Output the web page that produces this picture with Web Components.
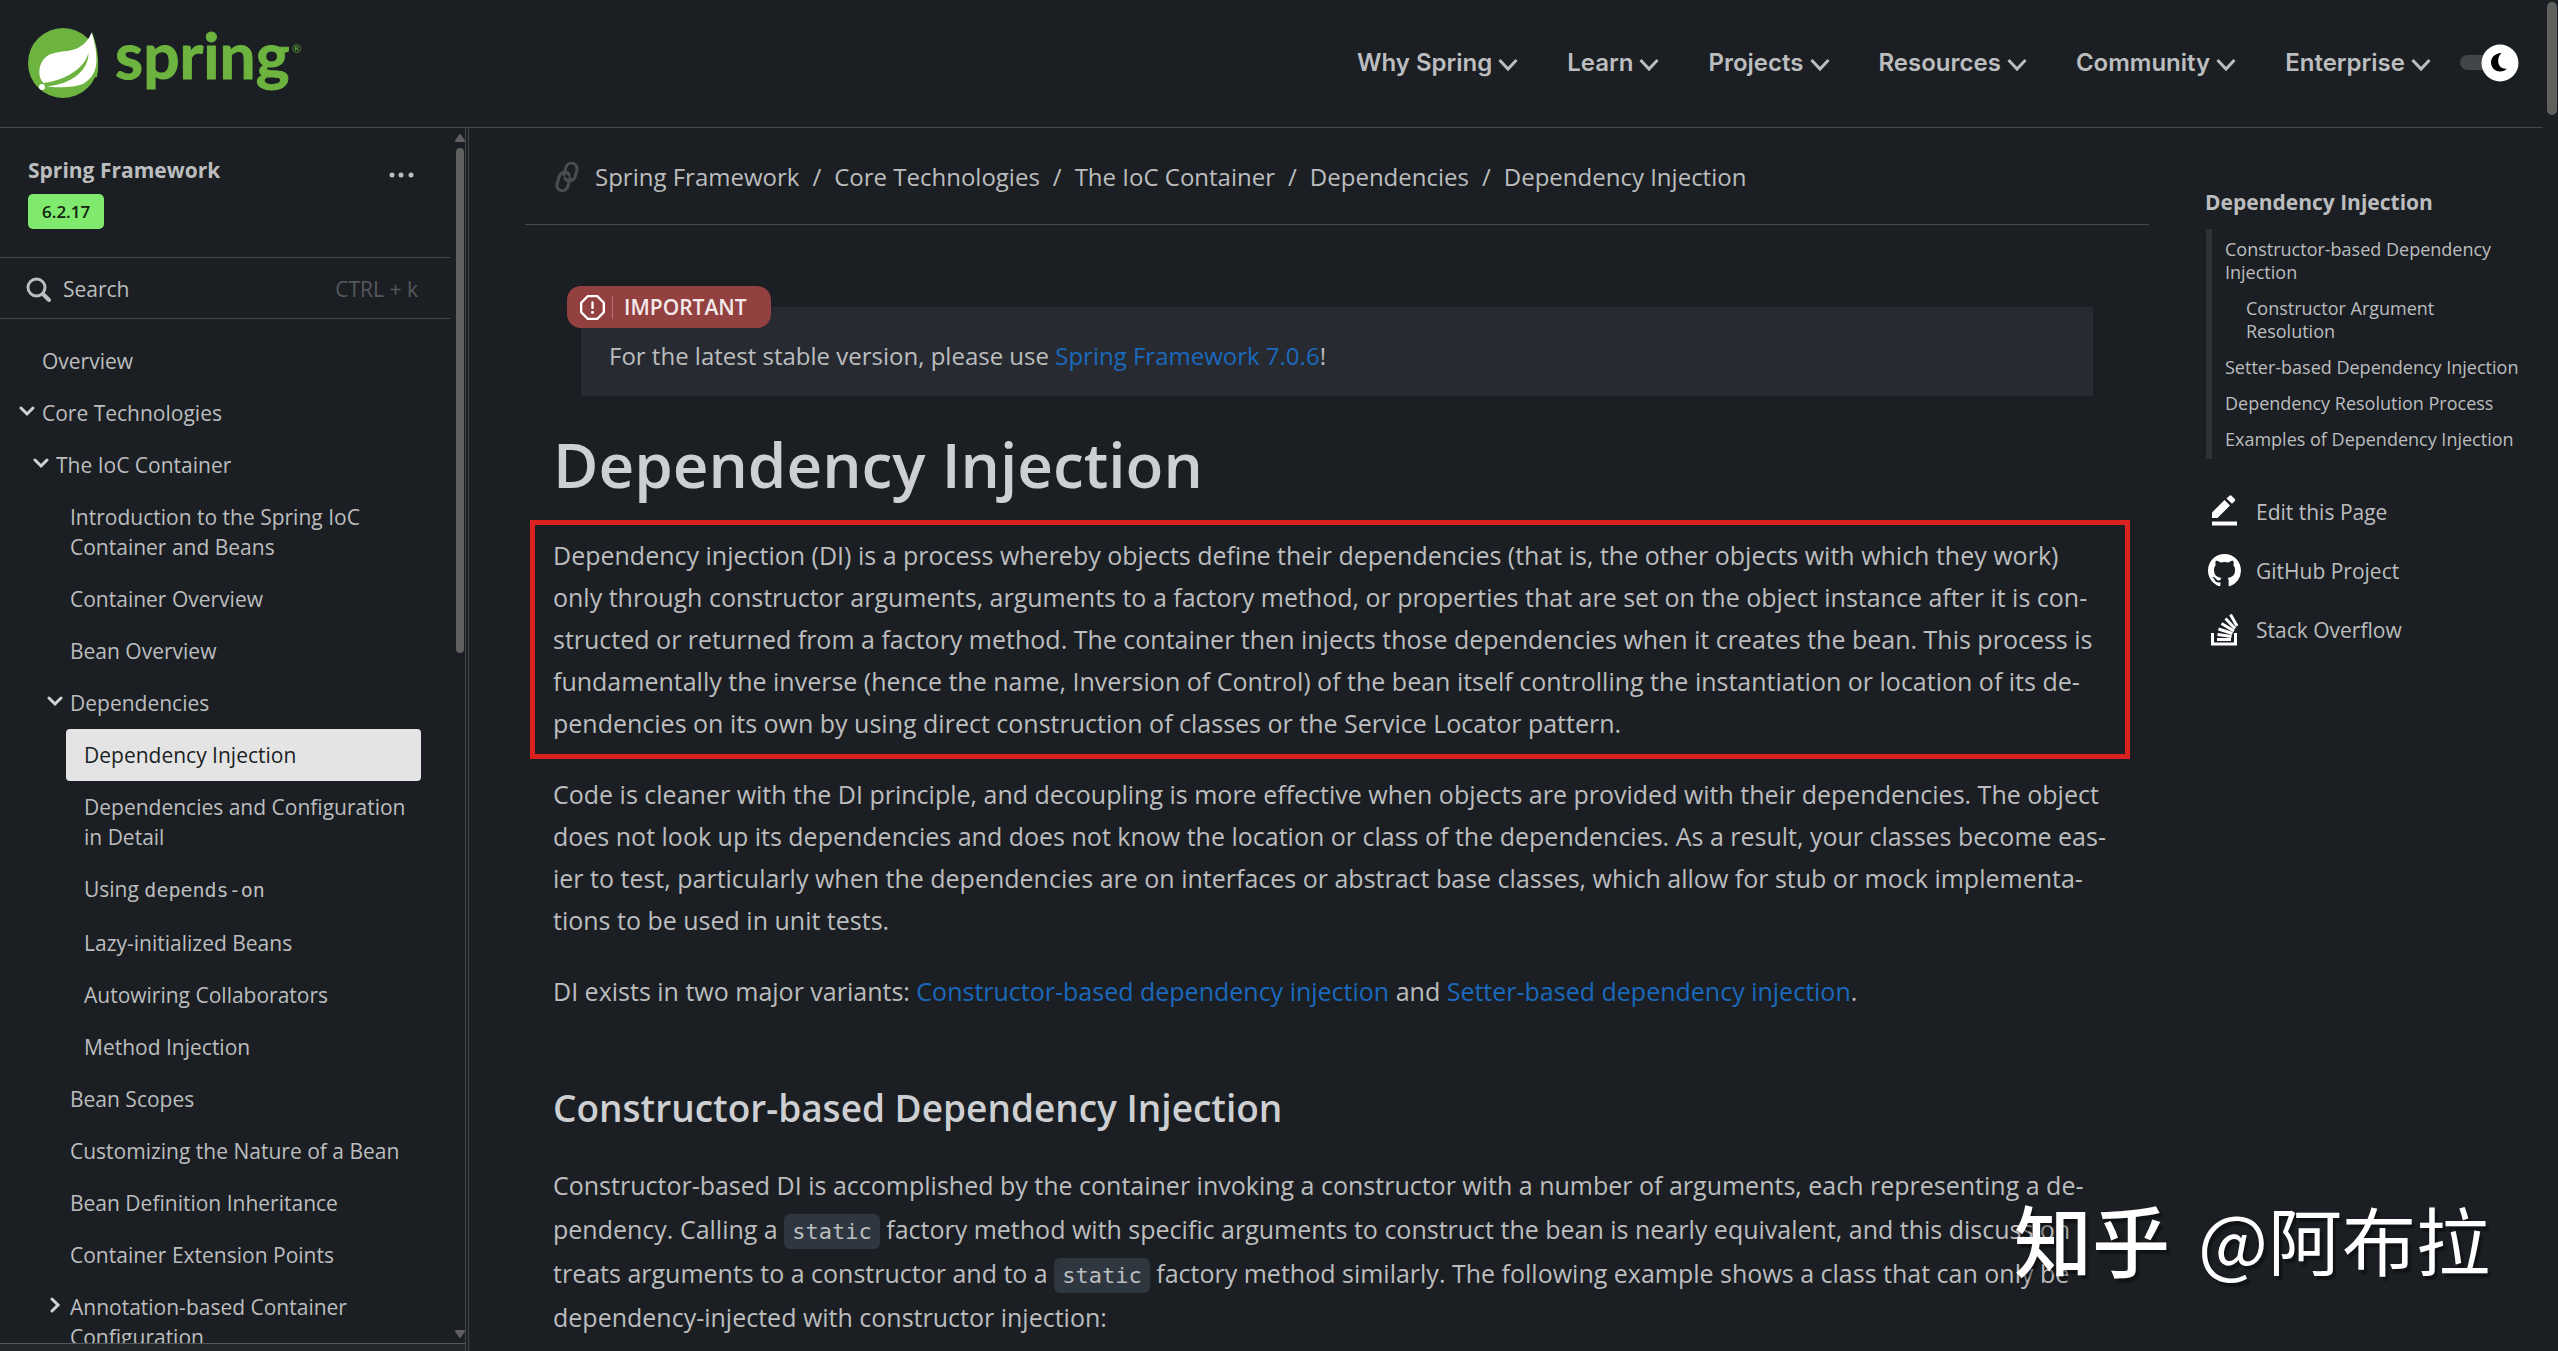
<!DOCTYPE html>
<html lang="en">
<head>
<meta charset="utf-8">
<title>Dependency Injection :: Spring Framework</title>
<style>
    :root{
        --bg:#1b1f23;
        --line:#45484d;
        --text:#bbbdbf;
        --heading:#cecfd2;
        --link:#1a69bd;
        --body-size:25px;
        --nav-size:21px;
    }
    html, body{
        height:100%;
        margin:0;
    }
    body{
        background:var(--bg);
        color:var(--text);
        font-family:"Open Sans", "Noto Sans", sans-serif;
        overflow:hidden;
    }
</style>
</head>
<body>
<docs-page>
    <docs-header slot="header">
        <menu-button>Why Spring</menu-button>
        <menu-button>Learn</menu-button>
        <menu-button>Projects</menu-button>
        <menu-button>Resources</menu-button>
        <menu-button>Community</menu-button>
        <menu-button>Enterprise</menu-button>
    </docs-header>

    <docs-sidebar slot="sidebar" version="6.2.17">
        <span slot="title">Spring Framework</span>
        <tree-item level="0">Overview</tree-item>
        <tree-item level="0" state="open">Core Technologies</tree-item>
        <tree-item level="1" state="open">The IoC Container</tree-item>
        <tree-item level="2">Introduction to the Spring IoC Container and Beans</tree-item>
        <tree-item level="2">Container Overview</tree-item>
        <tree-item level="2">Bean Overview</tree-item>
        <tree-item level="2" state="open">Dependencies</tree-item>
        <tree-item level="3" active>Dependency Injection</tree-item>
        <tree-item level="3">Dependencies and Configuration in Detail</tree-item>
        <tree-item level="3">Using <mono-text>depends-on</mono-text></tree-item>
        <tree-item level="3">Lazy-initialized Beans</tree-item>
        <tree-item level="3">Autowiring Collaborators</tree-item>
        <tree-item level="3">Method Injection</tree-item>
        <tree-item level="2">Bean Scopes</tree-item>
        <tree-item level="2">Customizing the Nature of a Bean</tree-item>
        <tree-item level="2">Bean Definition Inheritance</tree-item>
        <tree-item level="2">Container Extension Points</tree-item>
        <tree-item level="2" state="closed">Annotation-based Container Configuration</tree-item>
    </docs-sidebar>

    <docs-article></docs-article>

    <docs-toc slot="toc">
        <span slot="title">Dependency Injection</span>
        <toc-link>Constructor-based Dependency Injection</toc-link>
        <toc-link sub>Constructor Argument Resolution</toc-link>
        <toc-link>Setter-based Dependency Injection</toc-link>
        <toc-link>Dependency Resolution Process</toc-link>
        <toc-link>Examples of Dependency Injection</toc-link>
        <tool-link slot="tools" icon="edit">Edit this Page</tool-link>
        <tool-link slot="tools" icon="github">GitHub Project</tool-link>
        <tool-link slot="tools" icon="stack">Stack Overflow</tool-link>
    </docs-toc>

    <water-mark slot="overlay"></water-mark>
</docs-page>

<script>
// every element only has a fixed template, so they share this base
class Base extends HTMLElement {
    constructor(){
        super();
        this.attachShadow({mode:'open'});
        this.shadowRoot.innerHTML = this.html();
    }
    html(){
        return '<slot></slot>';
    }
}

class DocsPage extends Base {
    html(){
        return `
<style>
    :host{
        display:grid;
        grid-template-columns:1fr 15px;
        height:100vh;
    }
    .page{
        display:grid;
        grid-template-rows:auto 1fr;
        min-width:0;
        min-height:0;
    }
    .columns{
        display:grid;
        grid-template-columns:469px 1fr 338px;
        min-height:0;
    }
    main{
        padding:0 56px;
        min-width:0;
        overflow:hidden;
    }
    .track{
        padding:2px 1px 0 4px;
    }
    .thumb{
        height:113px;
        border-radius:5px;
        background:#60615f;
    }
</style>
<div class="page">
    <slot name="header"></slot>
    <div class="columns">
        <slot name="sidebar"></slot>
        <main><slot></slot></main>
        <slot name="toc"></slot>
    </div>
</div>
<div class="track"><div class="thumb"></div></div>
<slot name="overlay"></slot>`;
    }
}

class DocsHeader extends Base {
    html(){
        return `
<style>
    :host{
        display:flex;
        align-items:center;
        justify-content:space-between;
        height:125px;
        padding:0 24px 2px 28px;
        border-bottom:1px solid var(--line);
    }
    nav{
        display:flex;
        align-items:center;
        gap:49px;
    }
    .menus{
        display:flex;
        gap:49px;
    }
</style>
<spring-logo></spring-logo>
<nav>
    <div class="menus"><slot></slot></div>
    <theme-switch></theme-switch>
</nav>`;
    }
}

class SpringLogo extends Base {
    html(){
        return `
<style>
    :host{ display:block; }
    a{ display:block; }
    svg{
        display:block;
        overflow:visible;
    }
    text{
        font-family:Lato, sans-serif;
        fill:#6db33f;
    }
    .word{
        font-size:64px;
        font-weight:700;
        stroke:#6db33f;
        stroke-width:1;
        stroke-linejoin:round;
    }
    .reg{ font-size:11px; }
</style>
<a href="#" aria-label="Spring">
    <svg width="288" height="112" viewBox="0 -20 288 112">
        <circle cx="35" cy="36" r="35" fill="#6db33f"/>
        <path fill="#6db33f" d="M64 5C69 18 72 35 69 50L60 52Z"/>
        <path fill="#fff" d="M63.500 5.500C60.500 14 54 20.500 44 23C35 25 25 24.500 18.500 29.500C11 35 8.500 49 15.500 56C24 55 33 52.500 41 48C51 42.500 58 35 60.500 26C60.500 37 54 45.500 45.500 51C37.500 56 28 58.500 17.500 59.800C30 60.500 48 61 56.500 56C64 51 68.500 44 68.500 33C68.500 23 66.500 14 63.500 5.500Z"/>
        <circle cx="14" cy="60" r="3" fill="#fff"/>
        <text class="word" x="87" y="52">spring</text>
        <text class="reg" x="264" y="26">®</text>
    </svg>
</a>`;
    }
}

class MenuButton extends Base {
    html(){
        return `
<style>
    :host{ display:block; }
    button{
        display:flex;
        align-items:center;
        gap:6px;
        padding:0;
        border:0;
        background:none;
        color:var(--text);
        font:600 24px/32px Inter, "Open Sans", sans-serif;
        cursor:pointer;
    }
    svg{ margin-top:4px; }
</style>
<button type="button">
    <slot></slot>
    <svg width="20" height="14" viewBox="0 0 20 14" fill="none" stroke="currentColor" stroke-width="3">
        <path d="M1.500 2L10 11L18.500 2"/>
    </svg>
</button>`;
    }
}

class ThemeSwitch extends Base {
    html(){
        return `
<style>
    :host{
        display:block;
        margin-left:-20px;
    }
    label{
        display:grid;
        grid-template-columns:21px 38px;
        align-items:center;
    }
    input{
        grid-area:1 / 1 / 2 / 3;
        appearance:none;
        width:48px;
        height:15px;
        margin:0;
        border-radius:8px;
        background:#42454a;
    }
    svg{
        grid-area:1 / 2 / 2 / 3;
        display:block;
    }
</style>
<label>
    <input type="checkbox" role="switch" aria-label="Dark theme" checked>
    <svg width="38" height="38" viewBox="0 0 38 38">
        <circle cx="19" cy="19" r="18.500" fill="#fff"/>
        <path fill="#000" d="M20.500 9C13.500 9.500 10 13.500 10 18.500C10 23.500 14 27.500 19 27.500C22 27.500 24.500 26.500 26 24.500C22 25.500 18.500 23 17.500 19.500C16.500 15.500 17.500 11.500 20.500 9Z"/>
    </svg>
</label>`;
    }
}

class DocsSidebar extends Base {
    html(){
        return `
<style>
    :host{
        display:grid;
        grid-template-columns:1fr 15px 4px;
        grid-template-rows:1fr 8px;
        min-height:0;
        font-size:var(--nav-size);
        line-height:30px;
    }
    .content{
        overflow:hidden;
        min-height:0;
    }
    .product{
        display:flex;
        justify-content:space-between;
        padding:27px 35px 28px 28px;
        border-bottom:1px solid var(--line);
    }
    h2{
        margin:0;
        font-size:21px;
        font-weight:700;
    }
    .version{
        display:inline-block;
        margin-top:9px;
        padding:0 14px;
        border-radius:5px;
        background:#80ea6e;
        color:#12240e;
        font-size:17px;
        font-weight:600;
        line-height:35px;
    }
    button{
        border:0;
        padding:0;
        background:none;
        color:inherit;
        font:inherit;
        cursor:pointer;
    }
    .more{
        align-self:flex-start;
        height:40px;
    }
    .more svg{ display:block; }
    .search{
        display:flex;
        align-items:center;
        gap:12px;
        width:100%;
        height:61px;
        padding:2px 32px 0 26px;
        border-bottom:1px solid var(--line);
    }
    .keys{
        margin-left:auto;
        color:#55585c;
    }
    .tree{
        padding:16px 29px 0 19px;
    }
    .scroll{
        display:flex;
        flex-direction:column;
        align-items:center;
        padding:6px 0 5px 5px;
        min-height:0;
    }
    .thumb{
        width:8px;
        height:505px;
        margin:6px 0 auto;
        border-radius:4px;
        background:#606060;
    }
    .edge{
        grid-row:1 / 3;
        grid-column:3;
        border:solid var(--line);
        border-width:0 1px;
    }
    .bottom{
        grid-column:1 / 3;
        grid-row:2;
        border-top:1px solid #55585b;
        background:#23272b;
    }
</style>
<div class="content">
    <div class="product">
        <div>
            <h2><slot name="title"></slot></h2>
            <span class="version"></span>
        </div>
        <button class="more" type="button" aria-label="Versions">
            <svg width="28" height="40" viewBox="0 0 28 40" fill="currentColor">
                <circle cx="5" cy="20" r="2.500"/><circle cx="14" cy="20" r="2.500"/><circle cx="24" cy="20" r="2.500"/>
            </svg>
        </button>
    </div>
    <button class="search" type="button">
        <svg width="25" height="25" viewBox="0 0 25 25" fill="none" stroke="currentColor" stroke-width="3" stroke-linecap="round">
            <circle cx="10.500" cy="10.500" r="8.500"/><path d="M17 17L23 23" stroke-width="4"/>
        </svg>
        <span>Search</span>
        <span class="keys">CTRL + k</span>
    </button>
    <nav class="tree"><slot></slot></nav>
</div>
<div class="scroll">
    <svg width="10" height="8" viewBox="0 0 10 8"><path fill="#606060" d="M0 6.500L4 .8Q5-.4 6 .8L10 6.500Q10 8 8.800 8H1.200Q0 8 0 6.500Z"/></svg>
    <div class="thumb"></div>
    <svg width="10" height="8" viewBox="0 0 10 8"><path fill="#606060" d="M0 1.500L4 7.200Q5 8.400 6 7.200L10 1.500Q10 0 8.800 0H1.200Q0 0 0 1.500Z"/></svg>
</div>
<div class="edge"></div>
<div class="bottom"></div>`;
    }

    connectedCallback(){
        this.shadowRoot.querySelector('.version').textContent = this.getAttribute('version');
    }
}

class TreeItem extends Base {
    html(){
        return `
<style>
    :host{
        display:flex;
        align-items:flex-start;
    }
    :host([level="1"]){ padding-left:14px; }
    :host([level="2"]){ padding-left:28px; }
    :host([level="3"]){ padding-left:42px; }
    button{
        visibility:hidden;
        position:relative;
        z-index:1;
        flex:none;
        width:16px;
        height:52px;
        padding:0;
        border:0;
        background:none;
        color:inherit;
    }
    :host([state]) button{ visibility:visible; }
    :host([state="closed"]) svg{ transform:rotate(-90deg); }
    svg{
        display:block;
        margin-top:-4px;
    }
    a{
        flex:1;
        margin-left:-11px;
        padding:11px 4px 11px 18px;
        border-radius:4px;
        color:var(--text);
        text-decoration:none;
    }
    :host([active]) a{
        background:#e4e4e4;
        color:#1b1f23;
    }
</style>
<button type="button" aria-label="Toggle">
    <svg width="16" height="16" viewBox="0 0 16 16" fill="none" stroke="#d0d2d4" stroke-width="3" stroke-linecap="round">
        <path d="M2 5L8 11L14 5"/>
    </svg>
</button>
<a href="#"><slot></slot></a>`;
    }
}

class MonoText extends Base {
    html(){
        return `
<style>
    :host{
        display:inline-block;
        font:20px/31px "DejaVu Sans Mono", monospace;
    }
</style>
<slot></slot>`;
    }
}

class CodeText extends Base {
    html(){
        return `
<style>
    :host{
        display:inline-block;
        padding:0 8px;
        border-radius:6px;
        background:#2e3740;
        font:22px/35px "DejaVu Sans Mono", monospace;
    }
    code{ font:inherit; }
</style>
<code><slot></slot></code>`;
    }
}

class DocsArticle extends Base {
    html(){
        return `
<style>
    :host{
        display:block;
        font-size:var(--body-size);
        line-height:42px;
    }
    a{
        color:var(--link);
        text-decoration:none;
    }
    .crumbs{
        display:flex;
        align-items:center;
        height:94px;
        padding:2px 0 0 29px;
        border-bottom:1px solid var(--line);
        font-size:24px;
    }
    .crumbs a{ color:var(--text); }
    .crumbs svg{
        margin-right:15px;
    }
    ol{
        display:flex;
        margin:0;
        padding:0;
        list-style:none;
    }
    li + li::before{
        content:"/";
        margin:0 13px;
    }
    .doc{
        padding:82px 19px 0 28px;
        white-space:nowrap;
    }
    h1, h2{
        margin:0;
        color:var(--heading);
        font-weight:600;
    }
    h1{
        margin:26px 0 14px;
        font-size:62px;
        line-height:84px;
    }
    h2{
        margin:70px 0 29px;
        font-size:37px;
        line-height:52px;
    }
    p{ margin:0 0 29px; }
    .marked{
        margin:0 0 14px -23px;
        padding:9px 18px 10px;
        border:5px solid #da2221;
    }
    .tall{ line-height:44px; }
</style>
<nav class="crumbs" aria-label="Breadcrumbs">
    <svg width="26" height="34" viewBox="0 0 26 34" fill="none" stroke="#4b4e51" stroke-width="3" stroke-linecap="round">
        <path d="M10 15L12 7C14 1 24 2 23 10L21 17C19 22 12 22 11 18"/>
        <path d="M16 18L14 26C12 33 2 32 3 24L5 17C7 11 14 11 15 15"/>
    </svg>
    <ol>
        <li><a href="#">Spring Framework</a></li>
        <li><a href="#">Core Technologies</a></li>
        <li><a href="#">The IoC Container</a></li>
        <li><a href="#">Dependencies</a></li>
        <li><a href="#">Dependency Injection</a></li>
    </ol>
</nav>
<article class="doc">
    <important-note>For the latest stable version, please use <a href="#">Spring Framework 7.0.6</a>!</important-note>
    <h1>Dependency Injection</h1>
    <p class="marked">Dependency injection (DI) is a process whereby objects define their dependencies (that is, the other objects with which they work)<br>
        only through constructor arguments, arguments to a factory method, or properties that are set on the object instance after it is con-<br>
        structed or returned from a factory method. The container then injects those dependencies when it creates the bean. This process is<br>
        fundamentally the inverse (hence the name, Inversion of Control) of the bean itself controlling the instantiation or location of its de-<br>
        pendencies on its own by using direct construction of classes or the Service Locator pattern.</p>
    <p>Code is cleaner with the DI principle, and decoupling is more effective when objects are provided with their dependencies. The object<br>
        does not look up its dependencies and does not know the location or class of the dependencies. As a result, your classes become eas-<br>
        ier to test, particularly when the dependencies are on interfaces or abstract base classes, which allow for stub or mock implementa-<br>
        tions to be used in unit tests.</p>
    <p>DI exists in two major variants: <a href="#">Constructor-based dependency injection</a> and <a href="#">Setter-based dependency injection</a>.</p>
    <h2>Constructor-based Dependency Injection</h2>
    <p class="tall">Constructor-based DI is accomplished by the container invoking a constructor with a number of arguments, each representing a de-<br>
        pendency. Calling a <code-text>static</code-text> factory method with specific arguments to construct the bean is nearly equivalent, and this discussion<br>
        treats arguments to a constructor and to a <code-text>static</code-text> factory method similarly. The following example shows a class that can only be<br>
        dependency-injected with constructor injection:</p>
</article>`;
    }
}

class ImportantNote extends Base {
    html(){
        return `
<style>
    :host{
        display:block;
        position:relative;
        margin:0 37px 0 28px;
        padding:28px 28px 19px;
        background:#272b31;
        font-size:24px;
    }
    .label{
        position:absolute;
        top:-21px;
        left:-14px;
        display:flex;
        align-items:center;
        height:42px;
        padding:0 24px 0 13px;
        border-radius:14px;
        background:#934041;
        color:#f3e9e9;
        font-size:21px;
        font-weight:600;
    }
    .label span{
        margin-left:7px;
        padding-left:11px;
        border-left:1px solid #b27172;
        line-height:23px;
    }
</style>
<div class="label">
    <svg width="25" height="25" viewBox="0 0 16 16" fill="#fff">
        <path d="M4.470.220A.749.749 0 0 1 5 0h6c.199 0 .389.079.530.220l4.250 4.250c.141.140.220.331.220.530v6a.749.749 0 0 1-.220.530l-4.250 4.250A.749.749 0 0 1 11 16H5a.749.749 0 0 1-.530-.220L.220 11.530A.749.749 0 0 1 0 11V5c0-.199.079-.389.220-.530Zm.840 1.280L1.500 5.310v5.380l3.810 3.810h5.380l3.810-3.810V5.310L10.690 1.500ZM8 4a.750.750 0 0 1 .750.750v3.500a.750.750 0 0 1-1.500 0v-3.500A.750.750 0 0 1 8 4Zm0 8a1 1 0 1 1 0-2 1 1 0 0 1 0 2Z"/>
    </svg>
    <span>IMPORTANT</span>
</div>
<slot></slot>`;
    }
}

class DocsToc extends Base {
    html(){
        return `
<style>
    :host{
        display:block;
        padding-top:59px;
    }
    h3{
        margin:0 0 12px;
        font-size:21px;
        font-weight:700;
        line-height:30px;
    }
    .list{
        display:flex;
        flex-direction:column;
        gap:13px;
        margin-left:1px;
        padding:9px 16px 8px 13px;
        border-left:6px solid #2e3135;
    }
    .tools{
        display:flex;
        flex-direction:column;
        gap:26px;
        margin-top:36px;
    }
</style>
<h3><slot name="title"></slot></h3>
<nav class="list"><slot></slot></nav>
<div class="tools"><slot name="tools"></slot></div>`;
    }
}

class TocLink extends Base {
    html(){
        return `
<style>
    :host{
        display:block;
        font-size:18px;
        line-height:23px;
    }
    :host([sub]){
        padding:0 50px 0 21px;
    }
    a{
        color:inherit;
        text-decoration:none;
    }
</style>
<a href="#"><slot></slot></a>`;
    }
}

const toolIcons = {
    edit: `<path d="M4 26.500H29V30.500H4Z"/><path d="M4 23V17.500L16.500 5L22 10.500L9.500 23Z"/><path d="M18.500 3.500L21.500.700Q22.500-.200 23.500.700L26.800 4Q27.700 5 26.800 6L24 8.800Z"/>`,
    github: `<path transform="scale(2.062)" d="M8 0C3.580 0 0 3.580 0 8c0 3.540 2.290 6.530 5.470 7.590.4.070.550-.170.550-.380 0-.190-.010-.820-.010-1.490-2.010.370-2.530-.490-2.690-.940-.090-.230-.480-.940-.820-1.130-.280-.150-.680-.520-.010-.530.630-.010 1.080.580 1.230.820.720 1.210 1.870.870 2.330.660.070-.520.280-.870.510-1.070-1.780-.2-3.640-.890-3.640-3.950 0-.870.310-1.590.820-2.150-.080-.2-.360-1.020.080-2.120 0 0 .670-.210 2.200.820.640-.180 1.320-.270 2-.270s1.360.090 2 .270c1.530-1.040 2.200-.820 2.200-.820.440 1.100.160 1.920.080 2.120.510.560.820 1.270.820 2.150 0 3.070-1.870 3.750-3.650 3.950.290.250.540.730.540 1.480 0 1.070-.010 1.930-.010 2.200 0 .210.150.460.550.380A8.010 8.010 0 0 0 16 8c0-4.420-3.580-8-8-8Z"/>`,
    stack: `<g fill="none" stroke="#fff" stroke-width="3"><path d="M4.500 20V31H27.500V20"/><path d="M9 26.500H23"/><path d="M9.500 21.500L23.500 23.500"/><path d="M10.500 16L24.500 20.500"/><path d="M13.500 10.500L26 18"/><path d="M17.500 5.500L27 15.500"/><path d="M22.500 1.500L29 13"/></g>`
};

class ToolLink extends Base {
    html(){
        return `
<style>
    :host{
        display:block;
        font-size:21px;
    }
    a{
        display:flex;
        align-items:center;
        gap:15px;
        padding-left:3px;
        color:inherit;
        line-height:32px;
        text-decoration:none;
    }
    svg{ overflow:visible; }
</style>
<a href="#">
    <svg width="33" height="33" viewBox="0 0 33 33" fill="#fff"></svg>
    <span><slot></slot></span>
</a>`;
    }

    connectedCallback(){
        this.shadowRoot.querySelector('svg').innerHTML = toolIcons[this.getAttribute('icon')];
    }
}

class WaterMark extends Base {
    html(){
        return `
<style>
    :host{
        position:absolute;
        right:68px;
        bottom:61px;
        display:flex;
        align-items:center;
        gap:28px;
        color:#fff;
        font-family:"Noto Sans CJK SC", sans-serif;
        font-size:74px;
        line-height:104px;
        text-shadow:3px 4px 2px rgba(0, 0, 0, .4);
        pointer-events:none;
    }
    b{
        font-size:78px;
        font-weight:500;
    }
</style>
<b>知乎</b>
<span>@阿布拉</span>`;
    }
}

customElements.define('docs-page', DocsPage);
customElements.define('docs-header', DocsHeader);
customElements.define('spring-logo', SpringLogo);
customElements.define('menu-button', MenuButton);
customElements.define('theme-switch', ThemeSwitch);
customElements.define('docs-sidebar', DocsSidebar);
customElements.define('tree-item', TreeItem);
customElements.define('mono-text', MonoText);
customElements.define('code-text', CodeText);
customElements.define('docs-article', DocsArticle);
customElements.define('important-note', ImportantNote);
customElements.define('docs-toc', DocsToc);
customElements.define('toc-link', TocLink);
customElements.define('tool-link', ToolLink);
customElements.define('water-mark', WaterMark);
</script>
</body>
</html>
